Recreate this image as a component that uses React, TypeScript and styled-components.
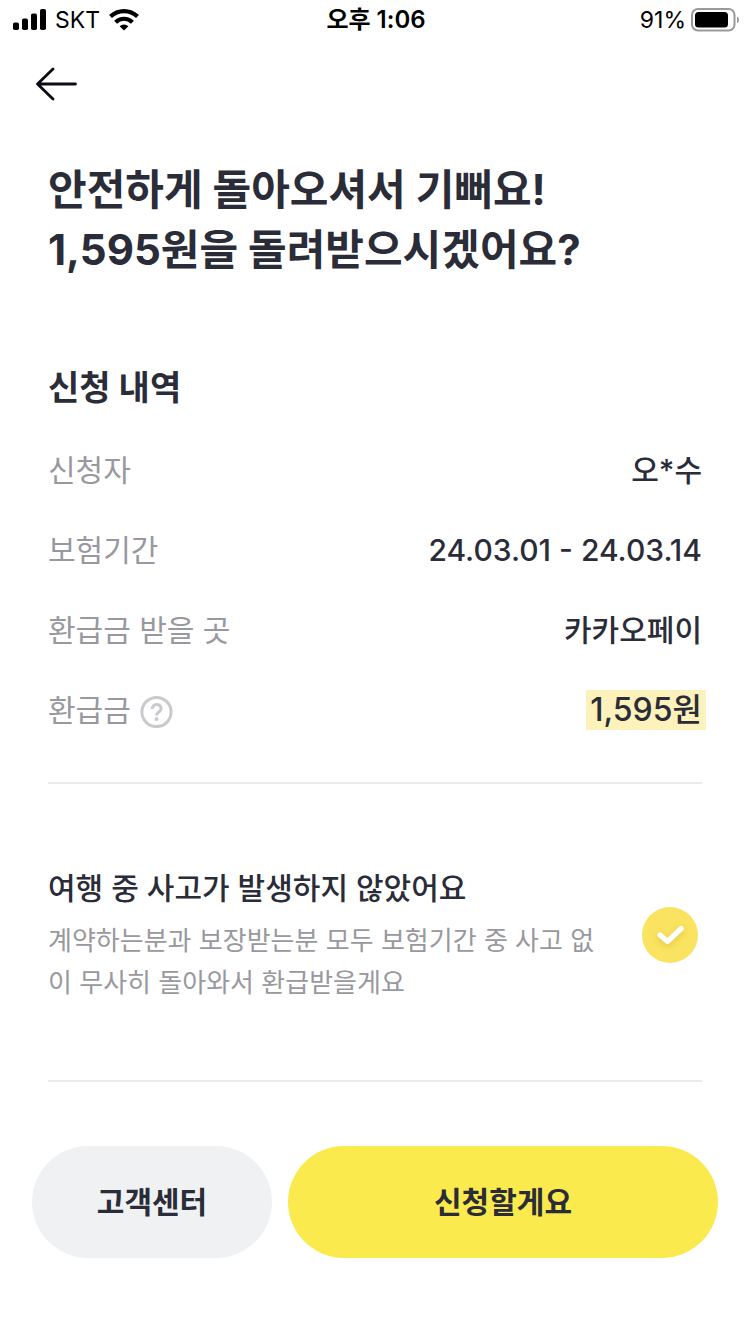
import React, { useState } from 'react';
import styled, { createGlobalStyle } from 'styled-components';

const ink = '#2a2c38';
const muted = '#98989e';
const fontStack = "Inter, 'Noto Sans CJK KR', sans-serif";

const GlobalStyle = createGlobalStyle`
  *, *::before, *::after {
    box-sizing: border-box;
  }
  body {
    margin: 0;
    background: #ffffff;
    color: ${ink};
    font-family: ${fontStack};
  }
  button {
    font-family: inherit;
    color: inherit;
    border: 0;
    padding: 0;
    cursor: pointer;
  }
`;

const Screen = styled.div`
  display: flex;
  flex-direction: column;
  min-height: 100vh;
`;

const StatusBar = styled.div`
  display: grid;
  grid-template-columns: 1fr auto 1fr;
  align-items: center;
  height: 40px;
  padding: 0 11px 0 13px;
  color: #000000;
  font-size: 23px;
  line-height: 40px;
`;

const StatusGroup = styled.div<{ $end?: boolean }>`
  display: flex;
  align-items: center;
  justify-content: ${({ $end }) => ($end ? 'flex-end' : 'flex-start')};
  gap: ${({ $end }) => ($end ? '5px' : '9px')};
`;

const Clock = styled.time`
  font-size: 24px;
  font-weight: 600;
`;

const NavBar = styled.header`
  display: flex;
  align-items: center;
  height: 88px;
  padding: 0 32px;
`;

const BackButton = styled.button`
  display: flex;
  background: none;
`;

const Content = styled.main`
  display: flex;
  flex-direction: column;
  padding: 32px 48px 0;
`;

const Title = styled.h1`
  margin: 0;
  font-size: 42px;
  line-height: 60px;
  font-weight: 700;
`;

const SectionTitle = styled.h2`
  margin: 84px 0 0;
  font-size: 34px;
  line-height: 48px;
  font-weight: 700;
`;

const Details = styled.dl`
  display: flex;
  flex-direction: column;
  gap: 40px;
  margin: 38px 0 0;
`;

const DetailRow = styled.div`
  display: flex;
  align-items: center;
  justify-content: space-between;
  font-size: 30px;
  line-height: 40px;
`;

const DetailLabel = styled.dt`
  display: flex;
  align-items: center;
  gap: 8px;
  color: ${muted};
`;

const DetailValue = styled.dd`
  margin: 0;
  font-weight: 500;
`;

const Amount = styled.mark`
  display: block;
  margin-right: -4px;
  padding: 0 4px;
  background: #fdf2bb;
  color: inherit;
  font-size: 32px;
`;

const HelpButton = styled.button`
  display: flex;
  background: none;
`;

const Divider = styled.hr`
  width: 100%;
  height: 2px;
  margin: 0;
  border: 0;
  background: #e9eaed;
`;

const DetailsEnd = styled(Divider)`
  margin-top: 52px;
`;

const Agreement = styled.label`
  display: flex;
  align-items: center;
  justify-content: space-between;
  gap: 40px;
  padding: 82px 4px 76px 0;
  cursor: pointer;
`;

const AgreementText = styled.span`
  display: flex;
  flex: 1;
  flex-direction: column;
  gap: 10px;
`;

const AgreementTitle = styled.span`
  font-size: 30px;
  line-height: 44px;
  font-weight: 500;
`;

const AgreementNote = styled.span`
  color: ${muted};
  font-size: 26px;
  line-height: 42px;
  word-break: break-all;
`;

const CheckWrap = styled.span`
  position: relative;
  flex: none;
  width: 56px;
  height: 56px;
`;

const CheckInput = styled.input`
  appearance: none;
  display: block;
  width: 56px;
  height: 56px;
  margin: 0;
  border-radius: 50%;
  background: #e4e5e9;
  cursor: pointer;

  &:checked {
    background: #fae360;
  }
`;

const CheckMark = styled.svg`
  position: absolute;
  inset: 0;
  pointer-events: none;
  filter: drop-shadow(0 2px 3px rgba(170, 130, 0, 0.3));
`;

const Actions = styled.footer`
  display: flex;
  gap: 16px;
  padding: 64px 32px 76px;
`;

const ActionButton = styled.button<{ $primary?: boolean }>`
  flex: ${({ $primary }) => ($primary ? '1' : '0 0 240px')};
  height: 112px;
  border-radius: 56px;
  background: ${({ $primary }) => ($primary ? '#fbea4d' : '#f0f1f3')};
  color: ${ink};
  font-size: 30px;
  line-height: 44px;
  font-weight: 700;
`;

const SignalIcon = () => (
  <svg width="33" height="22" viewBox="0 0 33 22" aria-hidden="true">
    <rect x="0" y="13.5" width="6" height="7.5" rx="1.8" />
    <rect x="9" y="9.5" width="6" height="11.5" rx="1.8" />
    <rect x="18" y="4.5" width="6" height="16.5" rx="1.8" />
    <rect x="27" y="0" width="6" height="21" rx="1.8" />
  </svg>
);

const WifiIcon = () => (
  <svg width="30" height="22" viewBox="0 0 30 22" aria-hidden="true">
    <g fill="none" stroke="#000" strokeWidth="4.2">
      <path d="M1.500 7.600a19.400 19.400 0 0 1 27 0" />
      <path d="M6.600 13.200a12 12 0 0 1 16.800 0" />
    </g>
    <path d="M10.600 17.200a6.300 6.300 0 0 1 8.800 0L15 21.600z" />
  </svg>
);

const BatteryIcon = () => (
  <svg width="48" height="24" viewBox="0 0 48 24" aria-hidden="true">
    <rect x="1" y="1" width="42.5" height="21.5" rx="6" fill="none" stroke="#9a9a9a" strokeWidth="2" />
    <rect x="4" y="4" width="33" height="15.5" rx="3.5" />
    <path d="M46 8.2c1.3.8 2 2 2 3.5s-.7 2.7-2 3.500z" fill="#9a9a9a" />
  </svg>
);

const BackIcon = () => (
  <svg width="48" height="40" viewBox="0 0 48 40" aria-hidden="true">
    <path
      d="M21 5 5.500 20 21 35M5.500 20H43.500"
      fill="none"
      stroke="#0b0c14"
      strokeWidth="2.800"
      strokeLinecap="round"
      strokeLinejoin="round"
    />
  </svg>
);

const HelpIcon = () => (
  <svg width="36" height="36" viewBox="0 0 36 36" aria-hidden="true">
    <circle cx="17.500" cy="20" r="14.600" fill="none" stroke="#c9cacd" strokeWidth="3" />
    <path
      d="M13.200 17c0-2.700 1.800-4.400 4.400-4.400s4.500 1.600 4.500 4c0 3.500-4.600 3.300-4.600 6.800"
      fill="none"
      stroke="#c9cacd"
      strokeWidth="3"
    />
    <circle cx="17.500" cy="27" r="2" fill="#c9cacd" />
  </svg>
);

const details = [
  { label: '신청자', value: '오*수' },
  { label: '보험기간', value: '24.03.01 - 24.03.14' },
  { label: '환급금 받을 곳', value: '카카오페이' },
];

export default function App() {
  const [agreed, setAgreed] = useState(true);

  return (
    <Screen>
      <GlobalStyle />
      <StatusBar>
        <StatusGroup>
          <SignalIcon />
          <span>SKT</span>
          <WifiIcon />
        </StatusGroup>
        <Clock>오후 1:06</Clock>
        <StatusGroup $end>
          <span>91%</span>
          <BatteryIcon />
        </StatusGroup>
      </StatusBar>

      <NavBar>
        <BackButton type="button" aria-label="뒤로">
          <BackIcon />
        </BackButton>
      </NavBar>

      <Content>
        <Title>
          안전하게 돌아오셔서 기뻐요!
          <br />
          1,595원을 돌려받으시겠어요?
        </Title>

        <SectionTitle>신청 내역</SectionTitle>
        <Details>
          {details.map(({ label, value }) => (
            <DetailRow key={label}>
              <DetailLabel>{label}</DetailLabel>
              <DetailValue>{value}</DetailValue>
            </DetailRow>
          ))}
          <DetailRow>
            <DetailLabel>
              환급금
              <HelpButton type="button" aria-label="환급금 안내">
                <HelpIcon />
              </HelpButton>
            </DetailLabel>
            <DetailValue>
              <Amount>1,595원</Amount>
            </DetailValue>
          </DetailRow>
        </Details>
        <DetailsEnd />

        <Agreement>
          <AgreementText>
            <AgreementTitle>여행 중 사고가 발생하지 않았어요</AgreementTitle>
            <AgreementNote>
              계약하는분과 보장받는분 모두 보험기간 중 사고 없이 무사히 돌아와서 환급받을게요
            </AgreementNote>
          </AgreementText>
          <CheckWrap>
            <CheckInput
              type="checkbox"
              checked={agreed}
              onChange={(event) => setAgreed(event.target.checked)}
            />
            <CheckMark width="56" height="56" viewBox="0 0 56 56" aria-hidden="true">
              <path
                d="M18 28 25.500 34.500 39.200 21.500"
                fill="none"
                stroke="#fff"
                strokeWidth="5.200"
                strokeLinecap="round"
                strokeLinejoin="round"
              />
            </CheckMark>
          </CheckWrap>
        </Agreement>
        <Divider />
      </Content>

      <Actions>
        <ActionButton type="button">고객센터</ActionButton>
        <ActionButton type="button" $primary>
          신청할게요
        </ActionButton>
      </Actions>
    </Screen>
  );
}
